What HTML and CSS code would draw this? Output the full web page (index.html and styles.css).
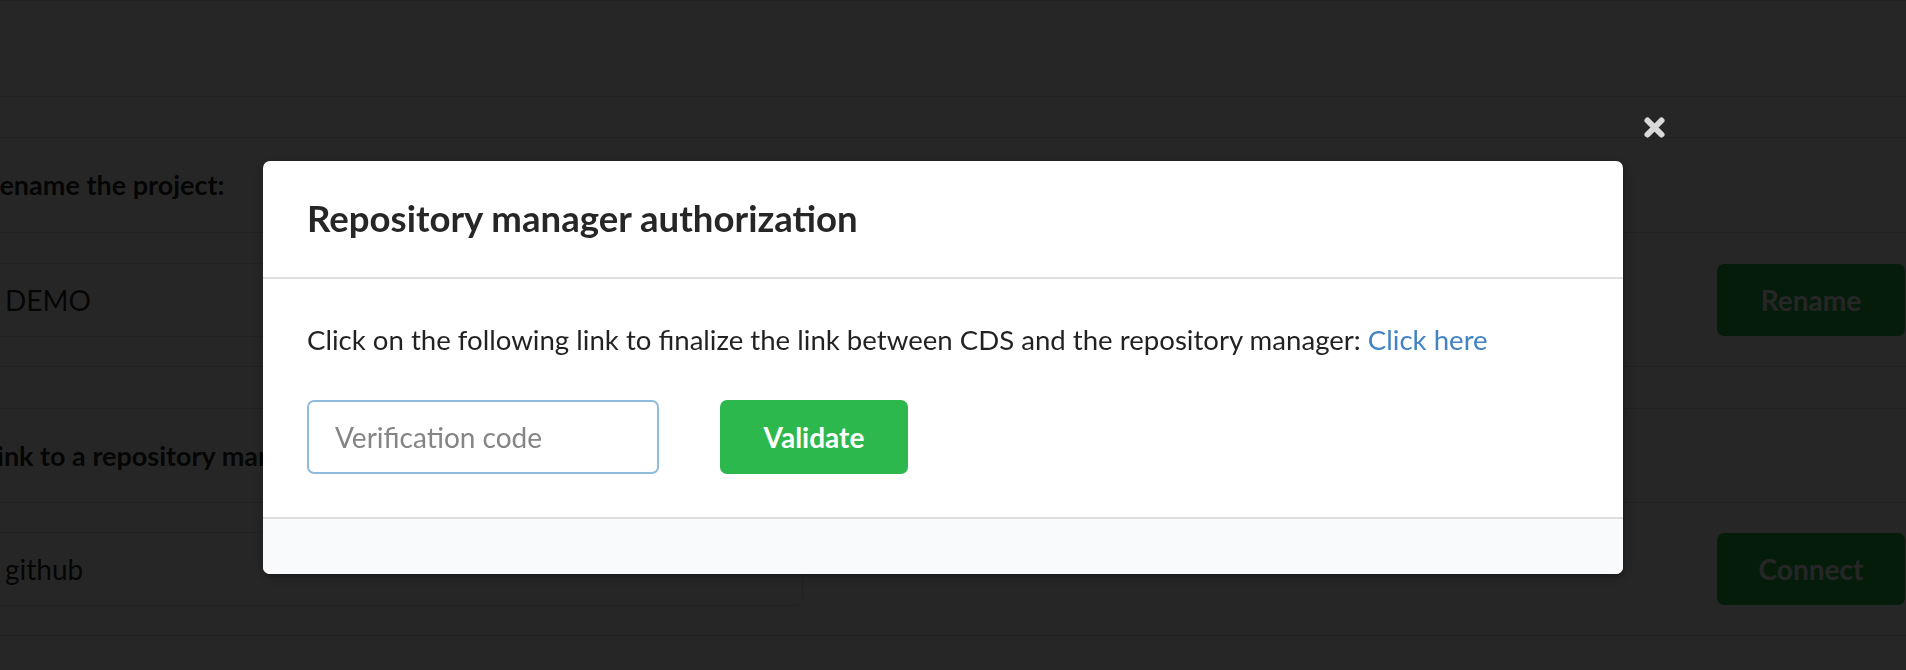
FILE: index.html
```html
<!DOCTYPE html>
<html lang="en">
<head>
<meta charset="utf-8">
<title>Project settings</title>
<link rel="stylesheet" href="styles.css">
</head>
<body>
<div class="page">
  <div class="row row-top"></div>
  <div class="row row-band"></div>
  <div class="row row-label">
    <div class="inner"><span class="label">Rename the project:</span></div>
  </div>
  <div class="row row-field">
    <div class="inner inner-field field">
      <div class="text-input">DEMO</div>
      <button class="btn">Rename</button>
    </div>
  </div>
  <div class="row row-band2"></div>
  <div class="row row-label2">
    <div class="inner"><span class="label">Link to a repository manager:</span></div>
  </div>
  <div class="row row-field2">
    <div class="inner inner-field field">
      <div class="text-input">github</div>
      <button class="btn">Connect</button>
    </div>
  </div>
  <div class="row row-rest"></div>
</div>

<div class="dimmer">
  <div class="modal">
    <svg class="close" viewBox="0 0 23 23" width="23" height="23" aria-label="close">
      <path d="M4.5 4.5 L18.5 18.5 M18.5 4.5 L4.5 18.5" stroke="currentColor" stroke-width="6" stroke-linecap="round" fill="none"/>
    </svg>
    <div class="modal-header">Repository manager authorization</div>
    <div class="modal-content">
      <p class="intro">Click on the following link to finalize the link between CDS and the repository manager: <a class="link" href="#">Click here</a></p>
      <div class="form">
        <input class="code" type="text" placeholder="Verification code">
        <button class="validate">Validate</button>
      </div>
    </div>
    <div class="modal-actions"></div>
  </div>
</div>
</body>
</html>
```

FILE: styles.css
```css
* { box-sizing: border-box; }

html, body {
  margin: 0;
  padding: 0;
  background: #ffffff;
  width: 1906px;
  height: 670px;
  overflow: hidden;
  font-family: "Lato", "Liberation Sans", sans-serif;
  color: rgba(0, 0, 0, 0.87);
}

.page {
  display: flex;
  flex-direction: column;
  border-top: 1px solid #dcdcdc;
}

.row {
  border-bottom: 1px solid #dcdcdc;
  display: flex;
  align-items: center;
}

.row-top { height: 96px; }
.row-band { height: 41px; }
.row-label { height: 95px; }
.row-field { height: 134px; }
.row-band2 { height: 42px; }
.row-label2 { height: 94px; }
.row-field2 { height: 133px; }
.row-rest { height: 60px; border-bottom: none; }

.inner {
  margin-left: -17px;
  width: calc(100% + 16px);
}

.inner-field {
  margin-left: -16px;
  width: calc(100% + 15px);
}

.label {
  font-weight: 700;
  font-size: 27px;
  line-height: 36px;
}

.field {
  display: flex;
  align-items: center;
  justify-content: space-between;
}

.text-input {
  width: 819px;
  height: 74px;
  border: 1px solid #dedede;
  border-radius: 7px;
  padding-left: 20px;
  font-size: 28px;
  display: flex;
  align-items: center;
}

.btn {
  width: 188px;
  height: 72px;
  border: none;
  border-radius: 7px;
  background: #21ba45;
  color: #ffffff;
  font-family: "Lato", "Liberation Sans", sans-serif;
  font-weight: 700;
  font-size: 28px;
  padding: 0;
}

.dimmer {
  position: fixed;
  inset: 0;
  background: rgba(0, 0, 0, 0.85);
  padding: 161px 0 0 263px;
}

.modal {
  position: relative;
  width: 1360px;
  background: #ffffff;
  border-radius: 7px;
  box-shadow: 1px 3px 3px 0 rgba(0, 0, 0, 0.2), 1px 3px 15px 2px rgba(0, 0, 0, 0.2);
}

.close {
  position: absolute;
  top: -45px;
  right: -43px;
  color: #d9d9d9;
}

.modal-header {
  padding: 35px 44px 37px;
  font-size: 36.6px;
  line-height: 44px;
  font-weight: 700;
  color: rgba(0, 0, 0, 0.85);
  border-bottom: 2px solid #dedede;
}

.modal-content {
  padding: 44px 44px 43px;
}

.intro {
  margin: 0 0 43px;
  font-size: 27.6px;
  line-height: 34px;
  color: rgba(0, 0, 0, 0.87);
}

.link {
  color: #4183c4;
  text-decoration: none;
}

.form {
  display: flex;
  align-items: center;
  gap: 61px;
}

.code {
  width: 352px;
  height: 74px;
  border: 2px solid #8fbbdc;
  border-radius: 7px;
  padding: 0 0 0 26px;
  font-family: "Lato", "Liberation Sans", sans-serif;
  font-size: 28px;
  color: rgba(0, 0, 0, 0.8);
  outline: none;
}

.code::placeholder {
  color: #858585;
}

.validate {
  width: 188px;
  height: 74px;
  border: none;
  border-radius: 7px;
  background: #2cb84c;
  color: #ffffff;
  font-family: "Lato", "Liberation Sans", sans-serif;
  font-weight: 700;
  font-size: 28px;
  padding: 0;
}

.modal-actions {
  height: 57px;
  border-top: 2px solid #dedede;
  background: #f9fafb;
  border-radius: 0 0 7px 7px;
}
```
